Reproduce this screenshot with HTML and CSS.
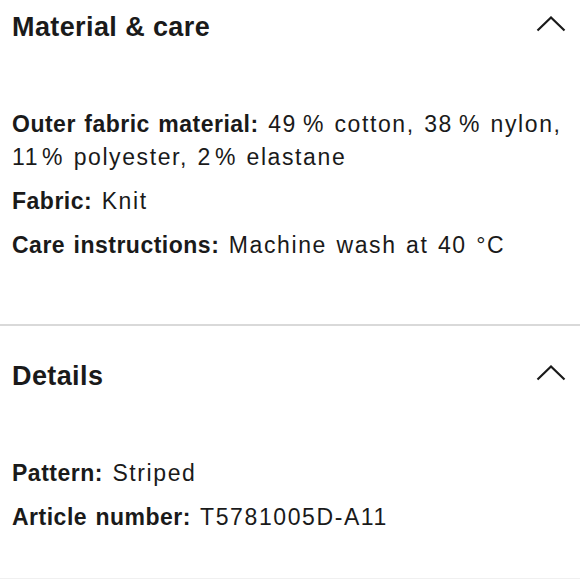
FILE: index.html
```html
<!DOCTYPE html>
<html lang="en">
<head>
<meta charset="utf-8">
<title>Material &amp; care</title>
<link rel="stylesheet" href="styles.css">
</head>
<body>
<main class="page">
  <section class="panel panel-first">
    <header class="panel-head">
      <h2 class="panel-title">Material &amp; care</h2>
      <svg class="chevron" width="30" height="16" viewBox="0 0 30 16" aria-hidden="true"><polyline points="1.5,14.5 15,1.5 28.5,14.5" fill="none" stroke="#1a1a1a" stroke-width="2.2" stroke-linejoin="miter"/></svg>
    </header>
    <div class="panel-body">
      <p class="attr"><b>Outer fabric material:</b> 49<span class="pct">%</span> cotton, 38<span class="pct">%</span> nylon, 11<span class="pct-sm">%</span> polyester, 2<span class="pct-sm">%</span> elastane</p>
      <p class="attr"><b>Fabric:</b> Knit</p>
      <p class="attr"><b>Care instructions:</b> Machine wash at 40 °C</p>
    </div>
  </section>
  <section class="panel panel-last">
    <header class="panel-head">
      <h2 class="panel-title">Details</h2>
      <svg class="chevron" width="30" height="16" viewBox="0 0 30 16" aria-hidden="true"><polyline points="1.5,14.5 15,1.5 28.5,14.5" fill="none" stroke="#1a1a1a" stroke-width="2.2" stroke-linejoin="miter"/></svg>
    </header>
    <div class="panel-body">
      <p class="attr"><b>Pattern:</b> Striped</p>
      <p class="attr"><b>Article number:</b> T5781005D-A11</p>
    </div>
  </section>
</main>
</body>
</html>
```
FILE: styles.css
```css
* { box-sizing: border-box; }
html, body { margin: 0; padding: 0; background: #fff; }
body {
  font-family: "Liberation Sans", Arial, sans-serif;
  color: #1a1a1a;
  width: 580px;
  height: 579px;
  overflow: hidden;
}
.page { display: flex; flex-direction: column; }
.panel {
  padding: 23px 12px 62px 12px;
  border-bottom: 2px solid #d9d9d9;
}
.panel-first { padding-top: 0; }
.panel-last { padding-bottom: 44px; border-bottom: 1px solid #f0f0f0; }
.panel-head {
  height: 54px;
  display: flex;
  align-items: center;
  justify-content: space-between;
}
.panel-title {
  margin: 0;
  font-size: 27px;
  font-weight: 700;
  letter-spacing: 0.4px;
}
.chevron { display: block; margin-right: 2px; margin-top: -6px; }
.panel-body {
  padding-top: 54px;
  font-size: 23px;
  line-height: 33px;
  letter-spacing: 1.6px;
  word-spacing: 1.5px;
}
.attr { margin: 0 0 11px; }
.attr:last-child { margin-bottom: 0; }
.attr b { font-weight: 700; letter-spacing: 0.5px; }
.pct { margin-left: 6px; }
.pct-sm { margin-left: 3px; }
```
